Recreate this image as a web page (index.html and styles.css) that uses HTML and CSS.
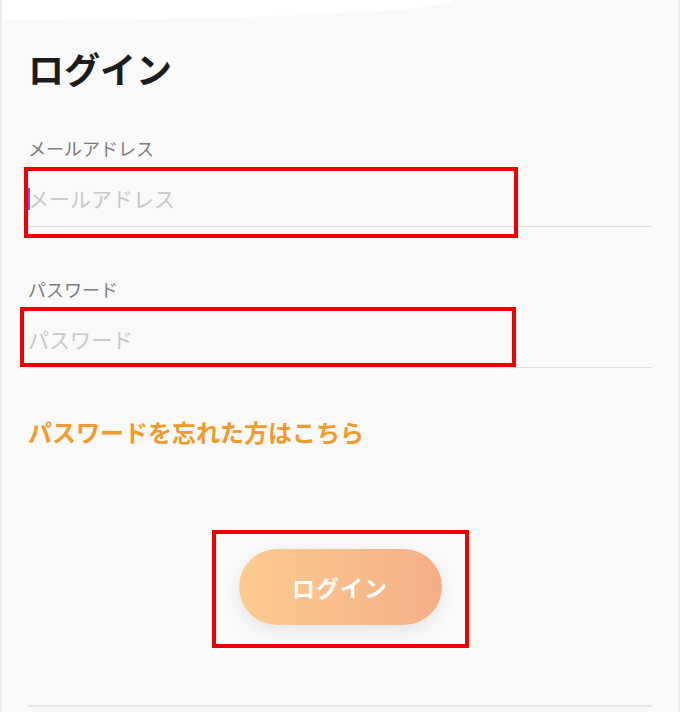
FILE: index.html
```html
<!DOCTYPE html>
<html lang="ja">
<head>
<meta charset="utf-8">
<title>ログイン</title>
<link rel="stylesheet" href="styles.css">
</head>
<body>
<div class="screen">
  <div class="top-curve"></div>
  <main class="page">
    <h1 class="title">ログイン</h1>
    <div class="field field-mail">
      <label class="label" for="mail">メールアドレス</label>
      <div class="input-wrap">
        <span class="caret"></span>
        <input class="input" id="mail" type="email" placeholder="メールアドレス">
      </div>
    </div>
    <div class="field field-pass">
      <label class="label" for="pass">パスワード</label>
      <div class="input-wrap">
        <input class="input" id="pass" type="password" placeholder="パスワード">
      </div>
    </div>
    <a class="forgot" href="#">パスワードを忘れた方はこちら</a>
    <div class="actions">
      <button class="btn" type="button">ログイン</button>
    </div>
    <div class="bottom-rule"></div>
    <div class="mark mark-1"></div>
    <div class="mark mark-2"></div>
    <div class="mark mark-3"></div>
  </main>
</div>
</body>
</html>
```

FILE: styles.css
```css
* { box-sizing: border-box; }
html, body { margin: 0; padding: 0; }
body {
  background: #f9f9f9;
  font-family: "Noto Sans CJK JP", "Noto Sans", sans-serif;
  width: 680px;
  height: 712px;
  overflow: hidden;
}
.screen {
  position: relative;
  width: 680px;
  height: 712px;
  border-left: 2px solid #ececec;
  border-right: 2px solid #ececec;
  background: #f9f9f9;
}
.top-curve {
  width: 450px;
  height: 20px;
  background: #ffffff;
  border-bottom-right-radius: 100% 100%;
}
.page {
  padding: 0 26px;
}
.title {
  margin: 23px 0 0 0;
  font-size: 36px;
  line-height: 50px;
  font-weight: 700;
  color: #1c1c1c;
}
.field { display: flex; flex-direction: column; }
.field-mail { margin-top: 42px; }
.field-pass { margin-top: 49px; }
.label {
  font-size: 18px;
  line-height: 26px;
  color: #7c7c7c;
}
.input-wrap {
  position: relative;
  margin-top: 9px;
  height: 57px;
  border-bottom: 1.5px solid #dddddd;
  display: flex;
  align-items: center;
}
.input {
  width: 100%;
  border: 0;
  outline: none;
  background: transparent;
  font-family: "Noto Sans CJK JP", "Noto Sans", sans-serif;
  font-size: 21px;
  line-height: 30px;
  padding: 0;
  color: #333;
}
.input::placeholder { color: #c8c8c8; }
.caret {
  position: absolute;
  left: 0;
  top: 18px;
  width: 2px;
  height: 22px;
  background: #6a5ee0;
}
.forgot {
  display: block;
  margin-top: 47px;
  font-size: 24px;
  line-height: 34px;
  font-weight: 700;
  color: #f19a2c;
  text-decoration: none;
}
.actions {
  display: flex;
  justify-content: center;
  margin-top: 100px;
}
.btn {
  width: 203px;
  height: 76px;
  border: 0;
  border-radius: 38px;
  background: linear-gradient(90deg, #fcca8e 0%, #f8bc8b 55%, #f5ad87 100%);
  box-shadow: 0 6px 16px rgba(0, 0, 0, 0.08);
  color: #ffffff;
  font-family: "Noto Sans CJK JP", "Noto Sans", sans-serif;
  font-size: 23px;
  font-weight: 700;
  letter-spacing: 1px;
}
.bottom-rule {
  margin-top: 80px;
  height: 2px;
  background: #e4e4e4;
}
.mark {
  position: absolute;
  border: 4px solid #ee0000;
}
.mark-1 { left: 22px; top: 167px; width: 494px; height: 71px; }
.mark-2 { left: 18px; top: 307px; width: 496px; height: 60px; }
.mark-3 { left: 210px; top: 530px; width: 257px; height: 118px; }
```
